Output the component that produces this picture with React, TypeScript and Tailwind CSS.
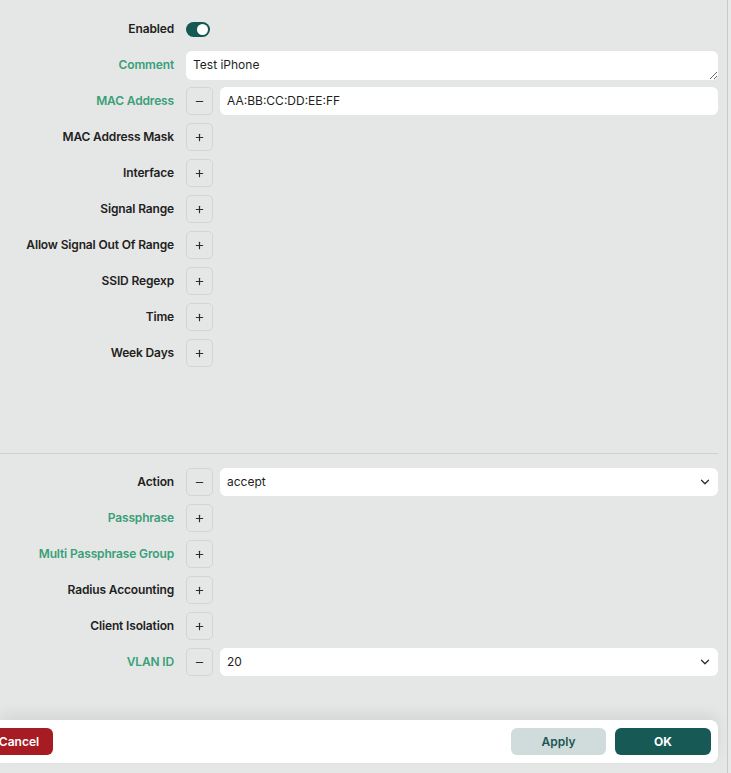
import { ChevronDown, Minus, Plus } from 'lucide-react';

type Row = {
  label: string;
  green?: boolean;
  kind: 'add' | 'input' | 'select' | 'toggle' | 'textarea';
  value?: string;
};

const topRows: Row[] = [
  { label: 'Enabled', kind: 'toggle' },
  { label: 'Comment', green: true, kind: 'textarea', value: 'Test iPhone' },
  { label: 'MAC Address', green: true, kind: 'input', value: 'AA:BB:CC:DD:EE:FF' },
  { label: 'MAC Address Mask', kind: 'add' },
  { label: 'Interface', kind: 'add' },
  { label: 'Signal Range', kind: 'add' },
  { label: 'Allow Signal Out Of Range', kind: 'add' },
  { label: 'SSID Regexp', kind: 'add' },
  { label: 'Time', kind: 'add' },
  { label: 'Week Days', kind: 'add' },
];

const bottomRows: Row[] = [
  { label: 'Action', kind: 'select', value: 'accept' },
  { label: 'Passphrase', green: true, kind: 'add' },
  { label: 'Multi Passphrase Group', green: true, kind: 'add' },
  { label: 'Radius Accounting', kind: 'add' },
  { label: 'Client Isolation', kind: 'add' },
  { label: 'VLAN ID', green: true, kind: 'select', value: '20' },
];

function SquareButton({ minus }: { minus?: boolean }) {
  return (
    <button
      type="button"
      className="flex h-[28px] w-[27px] shrink-0 items-center justify-center rounded-[5px] border border-[#d3d5d4] text-[#2a2d2c]"
    >
      {minus ? (
        <Minus className="h-[11px] w-[11px]" strokeWidth={2.5} aria-hidden />
      ) : (
        <Plus className="h-[11px] w-[11px]" strokeWidth={2.5} aria-hidden />
      )}
    </button>
  );
}

function Field({ row }: { row: Row }) {
  if (row.kind === 'toggle') {
    return (
      <span className="flex h-[15px] w-[24px] items-center justify-end rounded-full bg-[#155753] px-[2px]">
        <span className="h-[11px] w-[11px] rounded-full bg-white" />
      </span>
    );
  }
  if (row.kind === 'textarea') {
    return (
      <textarea
        defaultValue={row.value}
        rows={1}
        className="h-[29px] w-full resize-y rounded-[6px] bg-white px-[7px] py-[6px] text-[12px] leading-[16px] text-[#1c1f1e] outline-none"
      />
    );
  }
  if (row.kind === 'add') return <SquareButton />;
  return (
    <div className="flex flex-1 items-center gap-[7px]">
      <SquareButton minus />
      <div className="relative flex h-[28px] flex-1 items-center rounded-[6px] bg-white px-[7px] text-[12px] text-[#1c1f1e]">
        {row.value}
        {row.kind === 'select' && (
          <ChevronDown
            className="absolute right-[6px] top-1/2 h-[14px] w-[14px] -translate-y-1/2 text-[#2a2d2c]"
            strokeWidth={2.2}
            aria-hidden
          />
        )}
      </div>
    </div>
  );
}

function FormRow({ row }: { row: Row }) {
  return (
    <div className="flex h-[28px] items-center gap-[12px]">
      <span
        className={`w-[174px] shrink-0 text-right text-[12px] font-semibold tracking-[-0.15px] ${
          row.green ? 'text-[#3a9f78]' : 'text-[#1e2221]'
        }`}
      >
        {row.label}
      </span>
      <div className="flex flex-1 items-center">
        <Field row={row} />
      </div>
    </div>
  );
}

export default function App() {
  return (
    <div
      className="flex h-[773px] w-[731px] overflow-hidden bg-[#e5e7e6]"
      style={{ fontFamily: "Inter, 'Noto Sans', sans-serif" }}
    >
      <div className="flex w-[727px] flex-col">
        <div className="w-[718px]">
          <div className="flex flex-col gap-[8px] pt-[15px]">
            {topRows.map((r) => (
              <FormRow key={r.label} row={r} />
            ))}
          </div>

          <div className="mt-[86px] border-t border-[#cfd1d0]" />

          <div className="mt-[14px] flex flex-col gap-[8px]">
            {bottomRows.map((r) => (
              <FormRow key={r.label} row={r} />
            ))}
          </div>
        </div>

        <div className="mt-[44px] flex h-[43px] w-[718px] items-center justify-between rounded-r-[8px] bg-white pr-[7px] shadow-[0_-6px_14px_rgba(0,0,0,0.07)]">
          <button
            type="button"
            className="-ml-[15px] h-[27px] w-[68px] rounded-[6px] bg-[#a71b22] text-[12px] font-semibold text-white"
          >
            Cancel
          </button>
          <div className="flex gap-[9px]">
            <button
              type="button"
              className="h-[27px] w-[95px] rounded-[6px] bg-[#cfdcdb] text-[12px] font-semibold text-[#1c5551]"
            >
              Apply
            </button>
            <button
              type="button"
              className="h-[27px] w-[96px] rounded-[6px] bg-[#165955] text-[12px] font-bold text-white"
            >
              OK
            </button>
          </div>
        </div>
      </div>
      <div className="w-[4px] border-l border-[#c8cac9] bg-[#e7e8e8]" />
    </div>
  );
}
